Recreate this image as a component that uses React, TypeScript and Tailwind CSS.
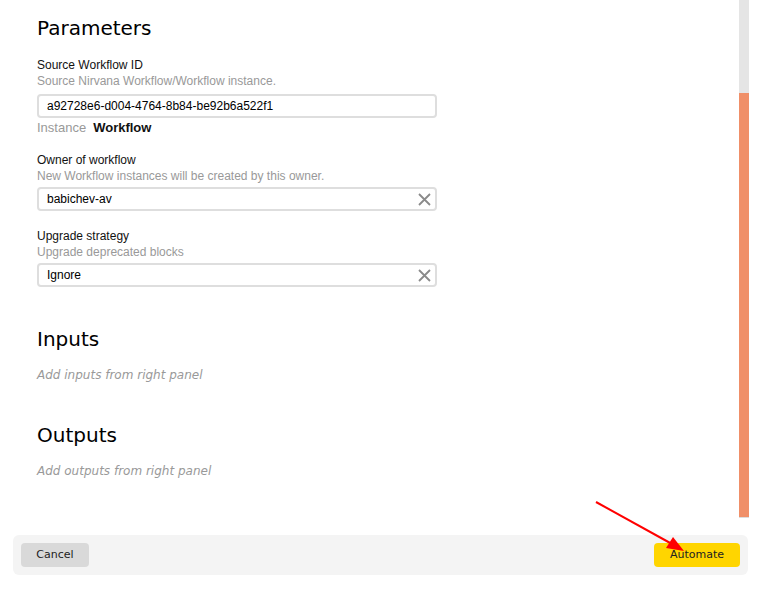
import React from "react";

const sans = "font-['Liberation_Sans',Arial,sans-serif]";
const dv = "font-['DejaVu_Sans',sans-serif]";

function XIcon() {
  return (
    <svg width="13" height="13" viewBox="0 0 13 13" className="shrink-0">
      <path d="M1 1 L12 12 M12 1 L1 12" stroke="#8a8a8a" strokeWidth="1.8" strokeLinecap="butt" />
    </svg>
  );
}

function Field({
  label,
  desc,
  value,
  clear,
  tight,
}: {
  label: string;
  desc: string;
  value: string;
  clear?: boolean;
  tight?: boolean;
}) {
  return (
    <div className={sans}>
      <div className="text-[12px] leading-4 text-[#111]">{label}</div>
      <div className="text-[12px] leading-4 text-[#999]">{desc}</div>
      <div
        className={`${tight ? "mt-[3px]" : "mt-[5px]"} flex h-6 w-[400px] items-center rounded-[4px] border-2 border-[#dedede] pl-2 pr-[4px]`}
      >
        <span className="flex-1 text-[12px] text-black">{value}</span>
        {clear && <XIcon />}
      </div>
    </div>
  );
}

export default function App() {
  return (
    <div className="relative h-[590px] w-[759px] overflow-hidden bg-white">
      <div className="flex h-[518px]">
        <div className="flex-1 pl-[37px] pt-4">
          <h2 className={`${dv} text-[20px] leading-6 text-black`}>Parameters</h2>
          <div className="mt-[17px]">
            <Field
              label="Source Workflow ID"
              desc="Source Nirvana Workflow/Workflow instance."
              value="a92728e6-d004-4764-8b84-be92b6a522f1"
            />
            <div className={`${sans} mt-[2px] flex items-center gap-[7px] text-[13px] leading-4`}>
              <span className="text-[#999]">Instance</span>
              <span className="font-bold text-[#111]">Workflow</span>
            </div>
          </div>
          <div className="mt-[16px]">
            <Field
              label="Owner of workflow"
              desc="New Workflow instances will be created by this owner."
              value="babichev-av"
              clear
              tight
            />
          </div>
          <div className="mt-[17px]">
            <Field label="Upgrade strategy" desc="Upgrade deprecated blocks" value="Ignore" clear tight />
          </div>
          <h2 className={`${dv} mt-10 text-[20px] leading-6 text-black`}>Inputs</h2>
          <div className={`${dv} mt-4 text-[12px] italic leading-4 text-[#999]`}>
            Add inputs from right panel
          </div>
          <h2 className={`${dv} mt-10 text-[20px] leading-6 text-black`}>Outputs</h2>
          <div className={`${dv} mt-4 text-[12px] italic leading-4 text-[#999]`}>
            Add outputs from right panel
          </div>
        </div>
        <div className="mr-[10px] flex w-[10px] flex-col">
          <div className="h-[93px] bg-[#e5e5e5]" />
          <div className="flex-1 bg-[#f08f68]" />
          <div className="h-px bg-[#dcdcdc]" />
        </div>
      </div>
      <div className="ml-[13px] mr-[11px] mt-[17px] flex items-center justify-between rounded-[6px] bg-[#f4f4f4] p-2">
        <button
          className={`${dv} flex h-6 w-[68px] items-center justify-center rounded-[4px] bg-[#d9d9d9] text-[11px] text-[#222]`}
        >
          Cancel
        </button>
        <button
          className={`${dv} flex h-6 w-[86px] items-center justify-center rounded-[4px] bg-[#ffd500] text-[11px] text-[#222]`}
        >
          Automate
        </button>
      </div>
      <svg className="pointer-events-none absolute left-0 top-0" width="759" height="590">
        <line x1="596" y1="502" x2="672" y2="544" stroke="#ff0000" strokeWidth="2" />
        <polygon points="684,551 666,548 673,537" fill="#ff0000" />
      </svg>
    </div>
  );
}
